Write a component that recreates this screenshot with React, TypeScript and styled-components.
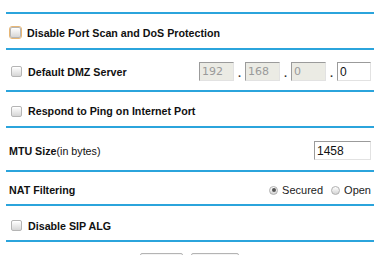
import React from "react";
import styled, { createGlobalStyle } from "styled-components";

const Global = createGlobalStyle`
  html, body { margin: 0; padding: 0; background: #fff; height: 255px; overflow: hidden; }
  body { font-family: "Liberation Sans", Arial, sans-serif; color: #111; }
`;

const BLUE = "#2ba4dc";

const Panel = styled.div`
  margin: 12px 8px 0 6px;
  border-top: 2px solid ${BLUE};
`;

const Row = styled.div<{ $h: number; $pt?: number }>`
  display: flex;
  align-items: center;
  height: ${(p) => p.$h}px;
  box-sizing: content-box;
  padding: ${(p) => p.$pt ?? 3}px 3px 0 3px;
  border-bottom: 2px solid ${BLUE};
`;

const Label = styled.span`
  font-size: 10.7px;
  font-weight: bold;
  color: #111;
  white-space: nowrap;
`;

const Hint = styled.span`
  font-weight: normal;
`;

const Spacer = styled.div`
  flex: 1;
`;

const Box = styled.span<{ $focus?: boolean; $ml?: number }>`
  display: inline-flex;
  align-items: center;
  justify-content: center;
  width: 13px;
  height: 13px;
  margin: 0 5px 0 ${(p) => p.$ml ?? 1}px;
  box-sizing: border-box;
  border-radius: 3px;
  border: 1.5px solid ${(p) => (p.$focus ? "#e7b675" : "transparent")};
  &::after {
    content: "";
    width: 9px;
    height: 9px;
    border-radius: 2px;
    border: 1px solid #b5b5b5;
    background: linear-gradient(#ffffff, #d6d6d6);
    box-shadow: inset 0 1px 1px rgba(255, 255, 255, 0.8);
  }
`;

const IpGroup = styled.div`
  display: flex;
  align-items: center;
`;

const Field = styled.input<{ $w: number }>`
  width: ${(p) => p.$w}px;
  height: 19px;
  box-sizing: border-box;
  padding: 0 2px;
  border-style: solid;
  border-width: 1px;
  border-color: #9b9b9b #e2e2e2 #e2e2e2 #9b9b9b;
  background: #fff;
  color: #111;
  font-family: "Liberation Sans", Arial, sans-serif;
  font-size: 12px;
  outline: none;
  &:disabled {
    background: #ebebe4;
    color: #9a9a9a;
    font-family: "DejaVu Sans", sans-serif;
    font-size: 11px;
  }
`;

const Dot = styled.span`
  width: 11px;
  text-align: center;
  font-size: 11px;
  font-weight: bold;
  color: #333;
  line-height: 19px;
  padding-top: 3px;
`;

const RadioLabel = styled.label`
  display: inline-flex;
  align-items: center;
  font-size: 11px;
  color: #222;
  margin-left: 8px;
  white-space: nowrap;
`;

const Radio = styled.span<{ $on?: boolean }>`
  position: relative;
  width: 9px;
  height: 9px;
  margin-right: 4px;
  border-radius: 50%;
  box-sizing: border-box;
  border: 1px solid #b0b0b0;
  background: linear-gradient(#ffffff, #d4d4d4);
  &::after {
    content: "";
    display: ${(p) => (p.$on ? "block" : "none")};
    position: absolute;
    left: 1.5px;
    top: 1.5px;
    width: 4px;
    height: 4px;
    border-radius: 50%;
    background: #555;
  }
`;

const Buttons = styled.div`
  display: flex;
  gap: 8px;
  margin: 11px 0 0 0;
  padding-left: 140px;
`;

const Btn = styled.button<{ $w: number }>`
  width: ${(p) => p.$w}px;
  height: 20px;
  margin: 0;
  padding: 0;
  border: 1px solid #b4b4b4;
  background: #f4f4f4;
  border-radius: 2px;
`;

export default function App() {
  return (
    <>
      <Global />
      <Panel>
        <Row $h={31} $pt={3}>
          <Box $focus $ml={0} />
          <Label>Disable Port Scan and DoS Protection</Label>
        </Row>
        <Row $h={37} $pt={3}>
          <Box />
          <Label>Default DMZ Server</Label>
          <Spacer />
          <IpGroup>
            <Field $w={35} disabled defaultValue="192" />
            <Dot>.</Dot>
            <Field $w={35} disabled defaultValue="168" />
            <Dot>.</Dot>
            <Field $w={35} disabled defaultValue="0" />
            <Dot>.</Dot>
            <Field $w={34} defaultValue="0" />
          </IpGroup>
        </Row>
        <Row $h={30} $pt={4}>
          <Box />
          <Label>Respond to Ping on Internet Port</Label>
        </Row>
        <Row $h={39} $pt={3}>
          <Label>
            MTU Size<Hint>(in bytes)</Hint>
          </Label>
          <Spacer />
          <Field $w={57} defaultValue="1458" />
        </Row>
        <Row $h={28} $pt={4}>
          <Label>NAT Filtering</Label>
          <Spacer />
          <RadioLabel>
            <Radio $on />
            Secured
          </RadioLabel>
          <RadioLabel>
            <Radio />
            Open
          </RadioLabel>
        </Row>
        <Row $h={29} $pt={5}>
          <Box />
          <Label>Disable SIP ALG</Label>
        </Row>
      </Panel>
      <Buttons>
        <Btn $w={43} />
        <Btn $w={48} />
      </Buttons>
    </>
  );
}
